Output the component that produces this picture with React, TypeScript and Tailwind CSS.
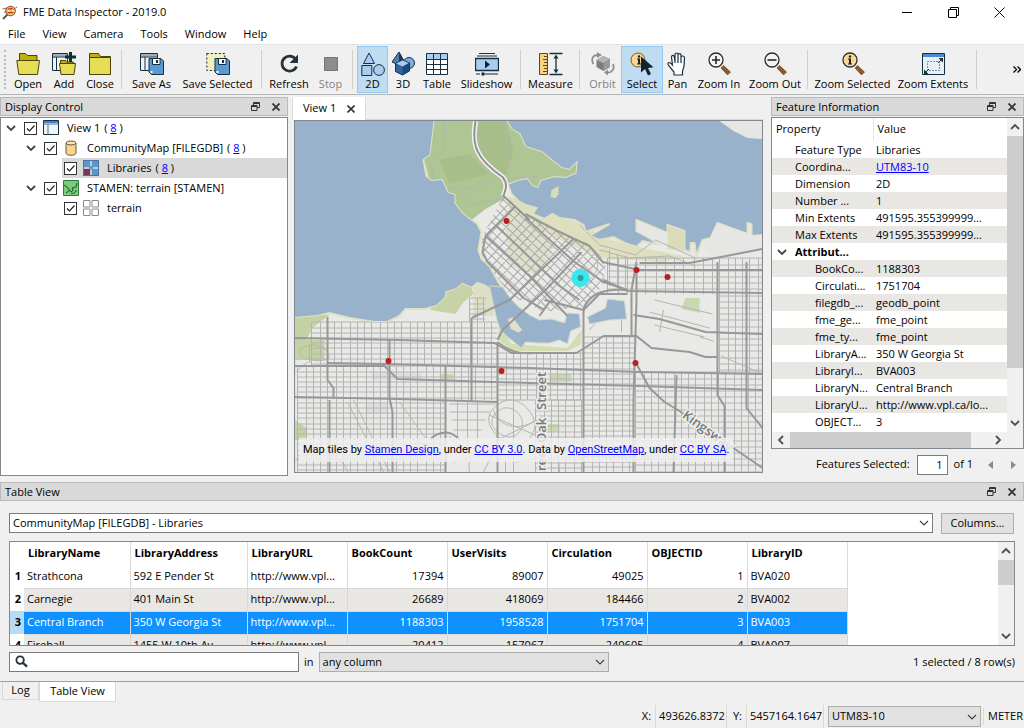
import type { ReactNode } from "react";

const FOLDER = "#e6dc55";
const INK = "#16303f";
const SKY = "#a9ccf0";

const Svg = ({ children }: { children: ReactNode }) => (
  <svg viewBox="0 0 24 24" className="h-6 w-6 shrink-0" fill="none" aria-hidden="true">
    {children}
  </svg>
);

const Floppy = () => (
  <g>
    <path d="M9 6.500h12l2.500 2.500v13.500H11.500L9 20z" fill="#5b98d6" stroke={INK} />
    <path d="M12.500 6.500h7.500v6h-7.500z" fill="#fff" stroke={INK} />
    <path d="M16 8h2v3h-2z" fill={INK} />
    <path d="M10.500 19h2v2h-2z" fill="#fff" />
  </g>
);

const Lens = ({ children }: { children?: ReactNode }) => (
  <g>
    <path d="M14 16l2.500-2.500 7 6.500-3 3z" fill="#8a5a2c" stroke="#5b3d20" strokeWidth=".6" />
    <circle cx="9" cy="8" r="7" fill="#f6f3ea" stroke="#2b2b2b" strokeWidth="1.300" />
    {children}
  </g>
);

const Info = () => (
  <g fill="#16242c">
    <circle cx="9" cy="4.500" r="1.200" />
    <path d="M7 6.500h3v5h1v1H7v-1h1v-4H7z" />
  </g>
);

const icons: Record<string, ReactNode> = {
  Open: (
    <Svg>
      <path d="M3.500 9V1.500h6l2 2h9.500V9" fill="#bfb010" stroke="#4b4608" />
      <path d="M.8 8.500h22.700l-2 14h-18.700z" fill={FOLDER} stroke="#4b4608" />
    </Svg>
  ),
  Add: (
    <Svg>
      <path d="M.5 1.500h15v17H.5z" fill="#edf3f8" stroke={INK} />
      <path d="M1 2h14v2.500H1z" fill="#a2adb5" />
      <path d="M.5 5h15M4.500 5v13" stroke={INK} />
      <path d="M8.500 11V8.500h5l1 1.500h7V11" fill="#bfb010" stroke="#4b4608" />
      <path d="M7.500 11.500h16l-1.500 11H9z" fill={FOLDER} stroke="#4b4608" />
      <path d="M18.500 0v10M13 5h11" stroke="#142c3a" strokeWidth="3" />
    </Svg>
  ),
  Close: (
    <Svg>
      <path d="M1.500 22.500v-21h9l2 3h10v18z" fill="#bfb010" stroke="#4b4608" />
      <path d="M1.500 5.500h21v17h-21z" fill={FOLDER} stroke="#4b4608" />
    </Svg>
  ),
  "Save As": (
    <Svg>
      <path d="M.5 1.500h17v17H.5z" fill="#edf3f8" stroke={INK} />
      <path d="M1 2h16v2.500H1z" fill="#a2adb5" />
      <path d="M.5 5h17M5 5v13" stroke={INK} />
      <Floppy />
    </Svg>
  ),
  "Save Selected": (
    <Svg>
      <path d="M.8 1.500h18v17H.8z" fill="#f1eec0" stroke="#222" strokeDasharray="2 2" />
      <Floppy />
    </Svg>
  ),
  Refresh: (
    <Svg>
      <path d="M18.500 7a7.500 7.500 0 1 0 1 7.500" stroke="#24343d" strokeWidth="2.800" />
      <path d="M21 2.500v8.500h-8.500z" fill="#24343d" />
    </Svg>
  ),
  Stop: (
    <Svg>
      <path d="M5.500 5.500h13v13h-13z" fill="#8c8c8c" stroke="#777" />
    </Svg>
  ),
  "2D": (
    <Svg>
      <path d="M8 1l5.500 10.500h-11z" stroke={INK} fill={SKY} />
      <path d="M.8 13.500h10v10h-10z" stroke={INK} fill={SKY} />
      <circle cx="18" cy="18" r="5.400" stroke={INK} fill={SKY} />
    </Svg>
  ),
  "3D": (
    <Svg>
      <path d="M8 0L1 10l7 3 5-4z" fill="#4e80b0" stroke={INK} />
      <path d="M8 0v13l5-4z" fill="#1d3b58" />
      <circle cx="18" cy="11" r="5.500" fill="#79aee0" stroke={INK} />
      <path d="M4.500 11.500L11.500 8l7 3v8l-7 4-7-3.500z" fill="#2d66a3" stroke={INK} />
      <path d="M4.500 11.500L11.500 8l7 3-7 4z" fill="#a9ccf0" stroke={INK} strokeWidth=".6" />
      <path d="M11.500 15l7-4v8l-7 4z" fill="#1c4a7a" />
    </Svg>
  ),
  Table: (
    <Svg>
      <path d="M1.500 1.500h21v21h-21z" fill="#fff" />
      <path d="M2 2h20v5H2z" fill={SKY} />
      <path d="M1.500 1.500h21v21h-21zM1.500 7.500h21M1.500 12.500h21M1.500 17.500h21M8.500 1.500v21M15.500 1.500v21" stroke={INK} />
    </Svg>
  ),
  Slideshow: (
    <Svg>
      <path d="M4 1.500h16M2 4h20" stroke={INK} />
      <path d="M.5 6.500h23v12H.5z" fill={SKY} stroke={INK} strokeWidth="1.300" />
      <path d="M10 8.500l5 4-5 4z" fill="#14242e" />
      <path d="M1 22h4M10 22h13" stroke="#14242e" />
      <path d="M6.500 20.500h3v3h-3z" fill="#14242e" />
    </Svg>
  ),
  Measure: (
    <Svg>
      <path d="M.5 1.500h8v21h-8z" fill="#fbd27e" stroke="#5b4a20" />
      <path d="M5 4.500h3M4 7.500h4M5 10.500h3M4 13.500h4M5 16.500h3M4 19.500h4" stroke="#5b4a20" />
      <path d="M10.500 1.500h13M10.500 22.500h13M17 4v16" stroke={INK} strokeWidth="1.300" />
      <path d="M17 2.500l-2.500 4h5zM17 21.500l-2.500-4h5z" fill={INK} />
    </Svg>
  ),
  Orbit: (
    <Svg>
      <path d="M5.500 8L12 4l7 3v8l-6.500 4L5.500 15z" fill="#7d7d7d" />
      <path d="M5.500 8L12 4l7 3-6.500 4z" fill="#b5b5b5" />
      <path d="M12.500 11L19 7v8l-6.500 4z" fill="#999" />
      <path d="M2.500 12C0 8 1 3 7 3M22 12c2 5-1 9-6 8.500" stroke="#8e8e8e" strokeWidth="1.800" />
      <path d="M6 0l5 3-5 3zM17 17.500l-4 3 4 3z" fill="#8e8e8e" />
    </Svg>
  ),
  Select: (
    <Svg>
      <circle cx="8" cy="8" r="7" fill="#fbd68c" stroke="#6f5c33" />
      <Info />
      <path d="M11 4.500v16l4-3.500 3 6.500 3-1.500-3-6 5.500-.8z" fill="#14242e" />
    </Svg>
  ),
  Pan: (
    <Svg>
      <path
        d="M8 23v-3L3 14c-1.500-2-1.500-3.500 0-3.500 1.200 0 2.500 1.500 3.500 2.500L5.500 5c0-2 2.200-2.300 2.700-.3L9 9V2.500c0-2 3-2 3 0V1.800 3c0-1.800 3-1.800 3 .2v2c.3-1.800 3.500-1.500 3.500.5L18 14.500 16.500 19v4zM9 9v2M12 3v8M15 4.500V11"
        fill="#fff"
        stroke={INK}
        strokeWidth="1.200"
      />
    </Svg>
  ),
  "Zoom In": (
    <Svg>
      <Lens>
        <path d="M5 8h8M9 4v8" stroke="#142c3a" strokeWidth="1.600" />
      </Lens>
    </Svg>
  ),
  "Zoom Out": (
    <Svg>
      <Lens>
        <path d="M4.500 8h9" stroke="#142c3a" strokeWidth="1.600" />
      </Lens>
    </Svg>
  ),
  "Zoom Selected": (
    <Svg>
      <Lens>
        <circle cx="9" cy="8" r="6" fill="#fbd68c" />
        <Info />
      </Lens>
    </Svg>
  ),
  "Zoom Extents": (
    <Svg>
      <path d="M1.500 1.500h22v21h-22z" fill="#e8f0f7" stroke={INK} />
      <path d="M2 2h21v3H2z" fill="#4a8bd0" />
      <path d="M6.500 9.500h12v9h-12z" stroke={INK} strokeDasharray="1 2" />
      <path d="M17 11l4-4M8 17l-4 4" stroke={INK} />
      <path d="M17.500 6H22v4.500zM3 17.500V22h4.500z" fill={INK} />
    </Svg>
  ),
};

type Tool = { label: string; width: string; state?: "on" | "off" };

const toolGroups: Tool[][] = [
  [
    { label: "Open", width: "w-9" },
    { label: "Add", width: "w-9" },
    { label: "Close", width: "w-9" },
  ],
  [
    { label: "Save As", width: "w-[51px]" },
    { label: "Save Selected", width: "w-[81px]" },
  ],
  [
    { label: "Refresh", width: "w-[46px]" },
    { label: "Stop", width: "w-[37px]", state: "off" },
  ],
  [
    { label: "2D", width: "w-[31px]", state: "on" },
    { label: "3D", width: "w-[30px]" },
    { label: "Table", width: "w-[38px]" },
    { label: "Slideshow", width: "w-[61px]" },
  ],
  [{ label: "Measure", width: "w-[51px]" }],
  [
    { label: "Orbit", width: "w-[37px]", state: "off" },
    { label: "Select", width: "w-[42px]", state: "on" },
    { label: "Pan", width: "w-[29px]" },
    { label: "Zoom In", width: "w-[54px]" },
    { label: "Zoom Out", width: "w-[58px]" },
  ],
  [
    { label: "Zoom Selected", width: "w-[81px]" },
    { label: "Zoom Extents", width: "w-[80px]" },
  ],
];

const Chevron = ({ className = "", thin = false }: { className?: string; thin?: boolean }) => (
  <svg viewBox="0 0 10 10" className={`h-2.5 w-2.5 shrink-0 ${className}`} fill="none" aria-hidden="true">
    <path d="M1 3l4 4 4-4" stroke="currentColor" strokeWidth={thin ? 1.2 : 1.8} />
  </svg>
);

const PanelTitle = ({ title }: { title: string }) => (
  <header className="flex h-[19px] shrink-0 items-center border border-[#b9b9b9] bg-[#d9d9d9] px-1">
    <h2 className="flex-1 text-[11px] leading-4">{title}</h2>
    <button type="button" aria-label={`Float ${title}`} className="mr-3 text-[#333]">
      <svg viewBox="0 0 9 9" className="h-[9px] w-[9px]" fill="none" stroke="currentColor" aria-hidden="true">
        <path d="M2.500 3V.5h6v5H6M2.500 1.500h6M.5 3.500h5.500v5H.5zM.5 4.500H6" />
      </svg>
    </button>
    <button type="button" aria-label={`Close ${title}`} className="mr-[3px] text-[#333]">
      <svg viewBox="0 0 8 8" className="h-2 w-2" stroke="currentColor" strokeWidth="1.800" aria-hidden="true">
        <path d="M.5.5l7 7M7.500.5l-7 7" />
      </svg>
    </button>
  </header>
);

const TitleBar = () => (
  <div className="flex h-6 shrink-0 items-center bg-white">
    <svg viewBox="0 0 16 16" className="ml-0.5 h-4 w-4" fill="none" aria-hidden="true">
      <path d="M1 15l5-5" stroke="#555" strokeWidth="1.800" />
      <path d="M.5 5l4-1M15 3l-3 2M2 8h3" stroke="#8a6a4a" />
      <circle cx="8.500" cy="7" r="4.800" fill="#f7c36a" stroke="#8b4a2c" />
      <path d="M5 5.500c2-2.500 5-2.500 7 0z" fill="#d8432f" />
      <path d="M5.500 8.500h6" stroke="#c0392b" strokeWidth="1.500" />
      <path d="M6 7h1.500M10 7h1.500" stroke="#fff" strokeWidth="1.500" />
    </svg>
    <h1 className="ml-[5px] flex-1 text-[11px]">FME Data Inspector - 2019.0</h1>
    <button type="button" aria-label="Minimize" className="flex w-[46px] justify-center">
      <svg viewBox="0 0 11 11" className="h-[11px] w-[11px]" stroke="#000"><path d="M0 5.500h10" /></svg>
    </button>
    <button type="button" aria-label="Restore" className="flex w-[46px] justify-center">
      <svg viewBox="0 0 11 11" className="h-[11px] w-[11px]" fill="none" stroke="#000">
        <path d="M.5 2.500h8v8h-8zM2.500 2.500v-2h8v8h-2" />
      </svg>
    </button>
    <button type="button" aria-label="Close" className="mr-0.5 flex w-[46px] justify-center">
      <svg viewBox="0 0 11 11" className="h-[11px] w-[11px]" stroke="#000"><path d="M.5.5l10 10M10.500.5l-10 10" /></svg>
    </button>
  </div>
);

const Toolbar = () => (
  <div className="flex h-[51px] shrink-0 items-stretch overflow-hidden border-t border-[#e3e3e3] border-b border-b-[#b4b4b4] py-px">
    <div className="my-1 ml-1 mr-1 w-0.5 shrink-0 border-l-2 border-dotted border-[#b9b9b9]" />
    {toolGroups.map((group) => (
      <div key={group[0].label} className="flex shrink-0">
        {group.map((t) => (
          <button
            key={t.label}
            type="button"
            disabled={t.state === "off"}
            aria-pressed={t.state === "on"}
            className={`flex h-[47px] shrink-0 flex-col items-center border pt-[5px] text-[11px] leading-4 whitespace-nowrap ${t.width} ${
              t.state === "on" ? "border-[#90c8f6] bg-[#c0dcf3]" : "border-transparent"
            } ${t.state === "off" ? "text-[#838383]" : ""}`}
          >
            {icons[t.label]}
            {t.label}
          </button>
        ))}
        <div className="mx-[3px] my-1 w-0.5 border-l border-[#cfcfcf]" />
      </div>
    ))}
    <button type="button" aria-label="More tools" className="mr-[3px] ml-auto self-center">
      <svg viewBox="0 0 8 7" className="h-[7px] w-2" fill="none" stroke="#000" strokeWidth="1.300">
        <path d="M.5.5l3 3-3 3M4.500.5l3 3-3 3" />
      </svg>
    </button>
  </div>
);

const TreeIcon = ({ kind }: { kind: string }) => (
  <svg viewBox="0 0 16 16" className="h-4 w-4 shrink-0" fill="none" aria-hidden="true">
    {kind === "view" && (
      <g>
        <path d="M.5.5h15v14H.5z" fill="#edf4fa" stroke={INK} />
        <path d="M1 1h14v2H1z" fill="#3b84cf" />
        <path d="M.5 4h15M5 4v10.500" stroke="#5c7486" />
      </g>
    )}
    {kind === "db" && (
      <g stroke="#6d5a34">
        <path d="M3 3v10c0 3 10 3 10 0V3" fill="#fad48d" />
        <ellipse cx="8" cy="3" rx="5" ry="2" fill="#fbe1ae" />
      </g>
    )}
    {kind === "layer" && (
      <g>
        <path d="M0 0h16v16H0z" fill="#a9cdec" />
        <path d="M8 0h8v16H8zM0 0h8v8H0z" fill="#5e94c6" />
        <path d="M0 8.500h7.500V16H0z" fill="#7a3454" />
        <path d="M8 1v5M8 9.500V15M1 8h5M10 8h5" stroke="#cfe3f5" strokeWidth="1.500" />
        <path d="M.5.5h15v15H.5z" stroke="#44769f" />
      </g>
    )}
    {kind === "raster" && (
      <g>
        <path d="M.5.5h15v15H.5z" fill="#7ccb7c" stroke="#2f7a3c" />
        <path d="M1 5l3 2 3 4c2 2 4-1 2-3l4-1 1-4M3 13l4-3M8 13c2 1 5 0 5-3" stroke="#175226" />
      </g>
    )}
    {kind === "grid" && (
      <path d="M.5.5h6.500v6.500h-6.500zM9 .5h6.500v6.500H9zM.5 9h6.500v6.500h-6.500zM9 9h6.500v6.500H9z" stroke="#8a8a8a" fill="#fff" />
    )}
  </svg>
);

const tree = [
  { label: "View 1", count: 8, icon: "view", pad: "pl-[5px]", open: true },
  { label: "CommunityMap [FILEGDB]", count: 8, icon: "db", pad: "pl-[25px]", open: true },
  { label: "Libraries", count: 8, icon: "layer", pad: "pl-[45px]", selected: true },
  { label: "STAMEN: terrain [STAMEN]", icon: "raster", pad: "pl-[25px]", open: true },
  { label: "terrain", icon: "grid", pad: "pl-[45px]" },
];

const DisplayControl = () => (
  <section className="mb-1 flex w-72 shrink-0 flex-col gap-px">
    <PanelTitle title="Display Control" />
    <ul className="flex-1 border border-[#828790] bg-white">
      {tree.map((n) => (
        <li key={n.label} className={`flex h-5 items-center ${n.pad}`}>
          <span className="flex w-[18px] shrink-0 text-[#444]">{n.open && <Chevron />}</span>
          <div className={`flex h-full flex-1 items-center ${n.selected ? "-ml-0.5 bg-[#d9d9d9] pl-0.5" : ""}`}>
            <label className="flex items-center">
              <input
                type="checkbox"
                defaultChecked
                className="h-[13px] w-[13px] appearance-none border border-[#333] bg-white"
              />
              <svg viewBox="0 0 13 13" className="-ml-[13px] h-[13px] w-[13px]" fill="none" stroke="#222" strokeWidth="1.200">
                <path d="M3 6.500l2.500 2.500 5-5.500" />
              </svg>
              <span className="ml-1.5 mr-2 flex"><TreeIcon kind={n.icon} /></span>
              <span className="text-[11px]">{n.label}</span>
            </label>
            {n.count && (
              <span className="ml-1 text-[11px]">
                ( <a href="#features" className="text-[#0000ff] underline">{n.count}</a> )
              </span>
            )}
          </div>
        </li>
      ))}
    </ul>
  </section>
);

// Street mesh for one rectangular district; every fourth block is a little wider.
const mesh = (x0: number, y0: number, x1: number, y1: number, dx: number, dy: number) => {
  let d = "";
  for (let x = x0, i = 0; x <= x1; x += dx + (i++ % 4 === 0 ? 2 : 0)) d += `M${x} ${y0}V${y1}`;
  for (let y = y0, i = 0; y <= y1; y += dy + (i++ % 5 === 0 ? 1 : 0)) d += `M${x0} ${y}H${x1}`;
  return d;
};

const districts = [
  mesh(312, 322, 498, 366, 7, 5),
  mesh(298, 366, 446, 472, 7, 5),
  mesh(446, 366, 498, 400, 7, 5),
  mesh(498, 353, 584, 400, 7, 5),
  mesh(536, 400, 584, 472, 7, 5),
  mesh(584, 337, 636, 472, 7, 5),
  mesh(636, 372, 763, 472, 7, 6),
  mesh(720, 258, 763, 372, 7, 6),
  mesh(608, 258, 720, 294, 9, 6),
  mesh(470, 298, 486, 322, 6, 5),
];

const land =
  "M435 121L431 155L424 160L427 176L432 180L443 179L449 192L456 194L456 203L463 212L470 218L478 224L482 232L479 250L482 259L490 266L500 284L506 292L494 292L486 286L478 283L472 288L463 284L457 289L447 292L446 298L437 306L425 309L406 309L400 316L388 322L375 322L350 318L330 313L318 316L295 318V473H763V235L752 236V224L748 223V234L718 223L711 238L703 240L697 256L695 243H691V252L685 250V231L668 225V233L637 220V231L650 238L660 245L643 241L637 247L625 243L614 237L600 240L590 236L610 224L586 232L584 225L575 220L560 218L553 214L545 219L533 214L537 208L526 205L520 202L512 194L508 184L518 180L528 178L533 185L538 187L541 180L555 176L566 177L576 173L577 163L570 170L562 168L552 160L542 152L526 147L520 134L512 129L507 121Z";

const minorRoads = [
  "M445 121l-1 30-13 12 3 16M450 187c15 6 30-2 53-10M460 187c7 8 2 18 18 17l25-6M504 121c5 18 5 35 4 60M508 181c15-4 20-6 30-4",
  "M348 402l36 70M354 400l36 72M400 402l26 36M520 130l8 18",
  "M508 400c-20 6-25 22-10 36s30 10 36-4-10-34-26-32M504 408c-12 5-16 16-6 24s20 6 24-4-6-22-18-20M514 400v72M490 415l50 22M482 448l60-30M500 440l-16 32M525 438l20 34M494 410c6 20 30 20 42 10",
  "M450 436c8 14 26 22 50 18M296 460c20-14 46-8 52 12M470 472c-4-20 14-28 30-20M560 472c0-20-10-30-20-34M590 330l10-12h22v14M700 337l14 4M655 300l58 14M650 312l60 16M655 325l50 12M664 310l-4 22",
  "M450 404h46M450 412h40M452 420h34M454 430h28M458 402v36M468 402v44M478 402v46M450 452l40-6M455 462l36-10M520 452l24-6M516 462l26-4M506 456v16",
  "M595 252c6 12 4 22-10 32M600 250l30 8 40-2 26 10M580 225l20 20 36 10 20-15 40 18M722 356l41 18M610 250v36M618 254v34M626 256v34",
  "M300 350c8-8 22-6 28 2s-6 10-16 8-12-4-12-10M310 345v18M296 372l12-10M730 121c8 10 18 14 33 13",
];

const majorRoads = [
  "M295 338L400 340L495 343L512 353H577L604 336H637L652 348L690 352L706 357H718",
  "M295 366H328M328 363L385 364L530 368L640 372L763 374",
  "M328 366H385L398 379L530 383L640 386L763 390",
  "M295 397L400 399L498 402",
  "M328 317V380L334 388V398M330 400V472M390 340V398L393 412V472M446 365V472M472 318V402M498 342V472M584 308V472M637 268V300L634 400V472M677 375L674 472M718 262V395L725 406V472M747 262V408L763 428",
  "M637 364L650 388L665 402L680 411L763 468",
  "M603 262L640 270H763M640 263H690L763 249M604 280L628 291L763 293M634 315L660 319L706 332L763 334M637 262L632 290V335",
  "M472 318L510 300L550 262L575 238M498 340L503 330L548 288L582 252M515 207L486 236L483 252L488 262L524 298L545 310M486 236L530 276L568 316M497 226L560 286L580 300M526 214L556 230L590 246L604 263M526 218L575 262L604 282L628 290M545 300L584 310L600 294H628M498 342C510 352 520 354 535 353M430 440C440 430 452 430 460 440M550 302L540 316M584 308C590 296 600 288 628 290",
];

const libraries = [
  [507, 221],
  [637, 270],
  [668, 277],
  [389, 361],
  [502, 371],
  [636, 363],
];

const CityMap = () => (
  <svg
    viewBox="295 121 468 351"
    preserveAspectRatio="xMidYMid slice"
    className="h-full w-full"
    role="img"
    aria-label="Terrain map of Vancouver with library locations"
  >
    <defs>
      <clipPath id="land"><path d={land} /></clipPath>
      <clipPath id="downtown">
        <path d="M504 196L526 214L556 230L590 244L606 262L604 284L586 306L545 312L512 296L482 258V238Z" />
      </clipPath>
    </defs>
    <path d="M295 121h468v351H295z" fill="#99b2cc" />
    <path d="M720 121l14 10 14 7 15 1v-18z" fill="#e6e6e4" />
    <path d={land} fill="#e9e9e7" stroke="#dfe2c4" strokeWidth="2" />
    <g clipPath="url(#land)">
      <path d="M420 121h100l60 30v25l-42 14-30-7-4 16-18 10-22 17-30-30-18-70z" fill="#aec594" />
      <path d="M480 121h26l8 30-8 24-18-12-12-20zM440 160l30-6 20 20-40 10z" fill="#a7be8b" />
      <path d="M440 280h30l4 14-10 8-8 12-25-4z" fill="#c7d2a6" />
      <path d="M474 282h20v34h-20z" fill="#dcdfc6" />
      <path d="M295 315h35l-16 12-8 14h-11zM295 340h30v20h-30zM295 420l12 8v12h-12z" fill="#c4d2a3" />
      <path d="M508 196l28 8 54 24 14 10 40 10 40 8-20 6-60-4-30-12-64-30z" fill="#dddfbf" />
      <path d="M505 212l20 4 30 30-16 30-30-12z" fill="#dfe0cc" />
      <path d="M668 225l17 6v20l-17-2z" fill="#dadbb8" />
      <path d="M637 220l31 13v14l-20-9-11-6zM718 223l30 11h15v18l-50 6-14-12z" fill="#e6e6e4" />
      <path d="M686 298h14v15l-18-4zM550 374h22v8h-22zM548 424h12v8h-12zM440 374h14v6h-14z" fill="#c9d8b0" />
      <path d="M500 322l12 22 56 4 14-18v14l-14 7h-56l-14-12z" fill="#d4dcb2" />
      <path d="M372 372h50v8h-50zM366 404h22v10h-22z" fill="#dedede" />
      <g fill="none" stroke="#b4b4b3" strokeWidth="1">
        {districts.map((d) => <path key={d.slice(0, 24)} d={d} />)}
        {minorRoads.map((d) => <path key={d.slice(0, 24)} d={d} />)}
      </g>
      <g clipPath="url(#downtown)">
        <path
          d={mesh(-80, -80, 80, 80, 7, 6)}
          transform="translate(548 256) rotate(43)"
          fill="none"
          stroke="#a9a9a8"
        />
      </g>
    </g>
    <path
      d="M490 286L503 287L510 297L518 306L530 315L540 320L552 319L565 323L568 313L580 314L581 327L571 331L568 344L560 340L550 343L538 343L526 342L522 348L512 340L506 335L500 328L497 318L494 305ZM588 317l18-9 2-9 17 2 2 18-17 1-20 4z"
      fill="#99b2cc"
      stroke="#d3dcc2"
    />
    <path d="M508 319l5-2 10 13-4 3-8-4z" fill="#dfe1d0" stroke="#aaa" strokeWidth=".6" />
    <path d="M552 190l7-4v8l-3 4-5-1z" fill="#dadbb8" />
    <path d="M476 121C472 145 476 158 503 177C509 184 506 190 504 196" fill="none" stroke="#f2f2f0" strokeWidth="5" />
    <path d="M476 121C472 145 476 158 503 177C509 184 506 190 504 196L530 220" fill="none" stroke="#929292" strokeWidth="2" />
    <g fill="none" stroke="#989898" strokeWidth="2" strokeLinejoin="round">
      {majorRoads.map((d) => <path key={d.slice(0, 24)} d={d} />)}
    </g>
    <g fill="#777" stroke="#ececea" strokeWidth="3" paintOrder="stroke" fontFamily="Open Sans, sans-serif" fontSize="13" fontWeight="600">
      <text transform="translate(546 410) rotate(-90)">Street</text>
      <text transform="translate(546 443) rotate(-90)">Oak</text>
      <text transform="translate(546 471) rotate(-90)">ree</text>
      <text transform="translate(682 417) rotate(36)">Kingsway</text>
    </g>
    <circle cx="581" cy="278" r="9" fill="#38e8ee" />
    <circle cx="581" cy="278" r="3" fill="#2f9c9e" />
    {libraries.map(([x, y]) => <circle key={x} cx={x} cy={y} r="3" fill="#bb2020" />)}
  </svg>
);

const MapView = () => (
  <main className="mb-[7px] flex min-w-0 flex-1 flex-col">
    <div className="flex h-[23px] shrink-0" role="tablist">
      <div className="flex w-[74px] items-center border-x border-[#dcdcdc] bg-white pl-2.5 text-[11px]">
        <button type="button" role="tab" aria-selected="true" className="flex-1 text-left">View 1</button>
        <button type="button" aria-label="Close View 1" className="mr-2.5">
          <svg viewBox="0 0 8 8" className="h-2 w-2" stroke="#333" strokeWidth="1.600"><path d="M.5.5l7 7M7.500.5l-7 7" /></svg>
        </button>
      </div>
      <div className="flex-1 border-b border-[#d9d9d9]" />
    </div>
    <div className="relative ml-0.5 min-h-0 flex-1 overflow-hidden border border-[#828790]">
      <div className="absolute inset-0"><CityMap /></div>
      <p className="absolute bottom-2.5 left-1 bg-[#eeeeee]/85 px-1 py-1 font-['Roboto',sans-serif] text-[11px] leading-4 whitespace-nowrap">
        Map tiles by <a href="#stamen" className="text-[#0000ff] underline">Stamen Design</a>, under{" "}
        <a href="#cc-by" className="text-[#0000ff] underline">CC BY 3.0</a>. Data by{" "}
        <a href="#osm" className="text-[#0000ff] underline">OpenStreetMap</a>, under{" "}
        <a href="#cc-by-sa" className="text-[#0000ff] underline">CC BY SA</a>.
      </p>
    </div>
  </main>
);

const properties = [
  ["Feature Type", "Libraries"],
  ["Coordina...", "UTM83-10"],
  ["Dimension", "2D"],
  ["Number ...", "1"],
  ["Min Extents", "491595.355399999..."],
  ["Max Extents", "491595.355399999..."],
];

const attributes = [
  ["BookCo...", "1188303"],
  ["Circulati...", "1751704"],
  ["filegdb_...", "geodb_point"],
  ["fme_ge...", "fme_point"],
  ["fme_ty...", "fme_point"],
  ["LibraryA...", "350 W Georgia St"],
  ["LibraryI...", "BVA003"],
  ["LibraryN...", "Central Branch"],
  ["LibraryU...", "http://www.vpl.ca/lo..."],
  ["OBJECT...", "3"],
];

const FeatureInformation = () => (
  <aside className="ml-1 flex w-[253px] shrink-0 flex-col">
    <PanelTitle title="Feature Information" />
    <div className="mt-px flex min-h-0 flex-1 flex-col border border-[#828790] bg-white">
      <div className="flex min-h-0 flex-1">
        <div className="min-w-0 flex-1 overflow-hidden">
          <table className="w-full table-fixed border-collapse text-[11px] whitespace-nowrap">
            <thead>
              <tr className="h-[23px] text-left">
                <th className="w-[101px] border-r border-[#e3e3e3] pl-1 font-normal">Property</th>
                <th className="pl-1 font-normal">Value</th>
              </tr>
            </thead>
            <tbody>
              {properties.map(([name, value]) => (
                <tr key={name} className="h-[17px] leading-4 even:bg-[#e9e7e3]">
                  <td className="p-0 pl-[23px]">{name}</td>
                  <td className="p-0 pl-[3px]">
                    {name === "Coordina..." ? <a href="#crs" className="text-[#0000ff] underline">{value}</a> : value}
                  </td>
                </tr>
              ))}
              <tr className="h-[17px] leading-4">
                <td className="p-0 font-bold">
                  <span className="flex items-center pl-[5px]">
                    <Chevron className="mr-2 text-[#444]" />
                    Attribut...
                  </span>
                </td>
                <td />
              </tr>
              {attributes.map(([name, value]) => (
                <tr key={name} className="h-[17px] leading-4 even:bg-[#e9e7e3]">
                  <td className="p-0 pl-[43px]">{name}</td>
                  <td className="p-0 pl-[3px]">{value}</td>
                </tr>
              ))}
            </tbody>
          </table>
        </div>
        <div className="flex w-4 shrink-0 flex-col items-center bg-[#f0f0f0] text-[#505050]">
          <Chevron className="my-1 rotate-180" />
          <div className="w-full flex-5 bg-[#cdcdcd]" />
          <div className="flex-1" />
          <Chevron className="my-1" />
        </div>
      </div>
      <div className="flex h-4 shrink-0 items-center bg-[#f0f0f0] text-[#505050]">
        <Chevron className="mx-1 rotate-90" />
        <div className="h-full flex-10 bg-[#cdcdcd]" />
        <div className="flex-1" />
        <Chevron className="mr-5 ml-1 -rotate-90" />
      </div>
    </div>
    <div className="flex h-[31px] shrink-0 items-center justify-end pr-2 text-[11px]">
      <label htmlFor="feature">Features Selected:</label>
      <input
        id="feature"
        defaultValue="1"
        className="mr-1.5 ml-[7px] h-5 w-[31px] border border-[#7a7a7a] bg-white pr-1 text-right"
      />
      of 1
      <button type="button" aria-label="Previous feature" className="ml-[15px] text-[#8a8a8a]">
        <svg viewBox="0 0 5 8" className="h-2 w-[5px]" fill="currentColor"><path d="M5 0v8L0 4z" /></svg>
      </button>
      <button type="button" aria-label="Next feature" className="ml-[18px] text-[#8a8a8a]">
        <svg viewBox="0 0 5 8" className="h-2 w-[5px]" fill="currentColor"><path d="M0 0v8l5-4z" /></svg>
      </button>
    </div>
  </aside>
);

const columns = [
  { name: "LibraryName", width: "w-[106px]" },
  { name: "LibraryAddress", width: "w-[117px]" },
  { name: "LibraryURL", width: "w-[100px]" },
  { name: "BookCount", width: "w-[100px]", numeric: true },
  { name: "UserVisits", width: "w-[100px]", numeric: true },
  { name: "Circulation", width: "w-[100px]", numeric: true },
  { name: "OBJECTID", width: "w-[100px]", numeric: true },
  { name: "LibraryID", width: "w-[100px]" },
];

const rows = [
  ["Strathcona", "592 E Pender St", "http://www.vpl...", "17394", "89007", "49025", "1", "BVA020"],
  ["Carnegie", "401 Main St", "http://www.vpl...", "26689", "418069", "184466", "2", "BVA002"],
  ["Central Branch", "350 W Georgia St", "http://www.vpl...", "1188303", "1958528", "1751704", "3", "BVA003"],
  ["Firehall", "1455 W 10th Av...", "http://www.vpl...", "20412", "157067", "240605", "4", "BVA007"],
];

const rowColor = ["bg-white", "bg-[#e9e7e3]", "bg-[#0f92ff] text-white", "bg-[#e9e7e3]"];

const TableView = () => (
  <section className="flex shrink-0 flex-col pt-0.5">
    <PanelTitle title="Table View" />
    <div className="mt-3 flex items-start gap-2 pr-[10px] pl-[9px]">
      <div className="relative flex-1">
        <select aria-label="Feature type" className="block h-5 w-full appearance-none border border-[#7a7a7a] bg-white px-[3px] text-[11px]">
          <option>CommunityMap [FILEGDB] - Libraries</option>
        </select>
        <Chevron thin className="pointer-events-none absolute top-[5px] right-1 text-[#444]" />
      </div>
      <button type="button" className="h-[21px] w-[73px] border border-[#adadad] bg-[#e1e1e1] text-[11px]">Columns...</button>
    </div>
    <div className="mx-[9px] mt-[7px] flex h-[105px] border border-[#828790] bg-white">
      <div className="min-w-0 flex-1 overflow-hidden">
        <table className="w-[837px] table-fixed border-collapse text-[11px] whitespace-nowrap">
          <thead>
            <tr className="h-[23px] text-left">
              <th className="w-[14px] p-0" aria-label="Row" />
              {columns.map((c) => (
                <th key={c.name} className={`border-r border-[#dcdcdc] p-0 pl-1 ${c.width}`}>{c.name}</th>
              ))}
            </tr>
          </thead>
          <tbody>
            {rows.map((r, i) => (
              <tr key={r[0]} className="h-[23px]">
                <th className={`p-0 pr-[3px] text-right ${i === 2 ? "bg-[#b8dcf5]" : "bg-white"}`}>{i + 1}</th>
                {r.map((cell, j) => (
                  <td
                    key={columns[j].name}
                    className={`border-r border-b border-[#d8d8d8] px-[3px] py-0 ${rowColor[i]} ${columns[j].numeric ? "text-right" : ""}`}
                  >
                    {cell}
                  </td>
                ))}
              </tr>
            ))}
          </tbody>
        </table>
      </div>
      <div className="flex w-4 shrink-0 flex-col items-center bg-[#f0f0f0] text-[#505050]">
        <Chevron className="my-1 rotate-180" />
        <div className="h-[25px] w-full bg-[#cdcdcd]" />
        <div className="flex-1" />
        <Chevron className="my-1" />
      </div>
    </div>
    <div className="mt-1.5 flex h-5 items-center px-[9px] text-[11px]">
      <div className="relative w-[290px]">
        <input type="search" aria-label="Search" className="block h-5 w-full border border-[#7a7a7a] bg-white pl-6" />
        <svg viewBox="0 0 14 14" className="absolute top-[3px] left-[6px] h-[13px] w-[13px]" fill="none" stroke="#24343d" strokeWidth="2">
          <circle cx="5.500" cy="5.500" r="4" />
          <path d="M8.500 8.500l4.500 4" strokeWidth="2.500" />
        </svg>
      </div>
      <label htmlFor="column" className="mx-[5px]">in</label>
      <div className="relative w-[290px]">
        <select id="column" className="block h-5 w-full appearance-none border border-[#adadad] bg-[#e1e1e1] px-[3px]">
          <option>any column</option>
        </select>
        <Chevron thin className="pointer-events-none absolute top-[5px] right-1 text-[#444]" />
      </div>
      <span className="ml-auto">1 selected / 8 row(s)</span>
    </div>
  </section>
);

const menus = ["File", "View", "Camera", "Tools", "Window", "Help"];

export default function App() {
  return (
    <div className="flex h-screen min-h-[600px] flex-col overflow-hidden bg-[#f0f0f0] font-['Open_Sans','Noto_Sans',sans-serif] text-black">
      <TitleBar />
      <nav className="flex h-5 shrink-0 items-center gap-[17px] bg-white pl-2 text-[11px]">
        {menus.map((m) => <button key={m} type="button">{m}</button>)}
      </nav>
      <Toolbar />
      <div className="flex min-h-0 flex-1 gap-1 pt-0.5">
        <DisplayControl />
        <MapView />
        <FeatureInformation />
      </div>
      <TableView />
      <div className="mt-[9px] flex h-[21px] shrink-0 items-start border-t border-[#a0a0a0] pl-0.5 text-[11px]" role="tablist">
        <button type="button" role="tab" aria-selected="false" className="h-[18px] w-[37px] border border-t-0 border-[#d9d9d9]">Log</button>
        <button type="button" role="tab" aria-selected="true" className="h-5 w-[77px] border border-t-0 border-[#d9d9d9] bg-white">Table View</button>
      </div>
      <footer className="mt-[3px] flex h-[23px] shrink-0 items-center justify-end text-[11px]">
        <span className="mr-1">X:</span>
        <span className="flex h-full items-center border-x border-[#d9d9d9] pr-px pl-[3px]">493626.8372</span>
        <span className="mr-1 ml-1.5">Y:</span>
        <span className="flex h-full items-center border-x border-[#d9d9d9] pr-px pl-[3px]">5457164.1647</span>
        <div className="relative mr-0.5 ml-1 w-[153px]">
          <select aria-label="Coordinate system" className="block h-[21px] w-full appearance-none border border-[#adadad] bg-[#e1e1e1] px-[3px]">
            <option>UTM83-10</option>
          </select>
          <Chevron thin className="pointer-events-none absolute top-[6px] right-1 text-[#444]" />
        </div>
        <span className="mr-px border-l border-[#d9d9d9] pl-1">METER</span>
      </footer>
    </div>
  );
}
